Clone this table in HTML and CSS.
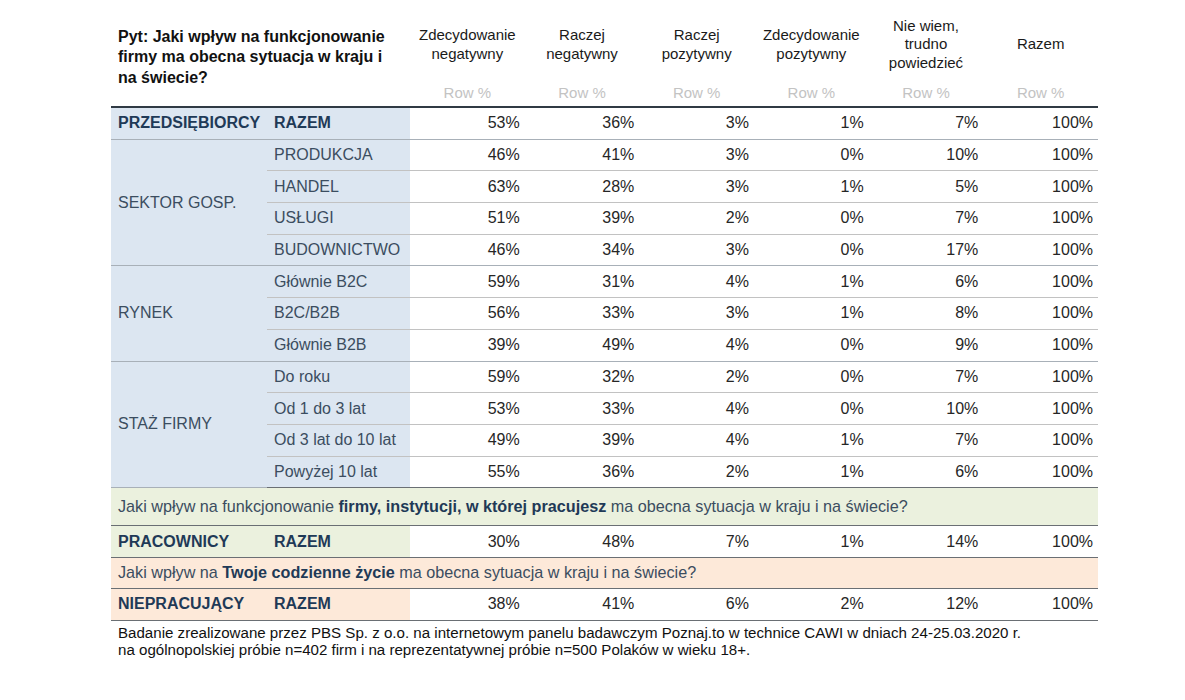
FILE: index.html
```html
<!DOCTYPE html>
<html lang="pl">
<head>
<meta charset="utf-8">
<title>Pyt: Jaki wpływ</title>
<link rel="stylesheet" href="styles.css">
</head>
<body>
<div class="page">
<table class="survey">
  <colgroup>
    <col class="c-group"><col class="c-sub">
    <col class="c-num"><col class="c-num"><col class="c-num"><col class="c-num"><col class="c-num"><col class="c-num">
  </colgroup>
  <thead>
    <tr class="h-labels">
      <th class="question" colspan="2" rowspan="2">Pyt: Jaki wpływ na funkcjonowanie<br>firmy ma obecna sytuacja w kraju i<br>na świecie?</th>
      <th>Zdecydowanie<br>negatywny</th>
      <th>Raczej<br>negatywny</th>
      <th>Raczej<br>pozytywny</th>
      <th>Zdecydowanie<br>pozytywny</th>
      <th>Nie wiem,<br>trudno<br>powiedzieć</th>
      <th>Razem</th>
    </tr>
    <tr class="h-unit">
      <th>Row %</th><th>Row %</th><th>Row %</th><th>Row %</th><th>Row %</th><th>Row %</th>
    </tr>
  </thead>
  <tbody>
    <tr class="group-end">
      <td class="lbl blue strong">PRZEDSIĘBIORCY</td><td class="lbl blue strong">RAZEM</td>
      <td>53%</td><td>36%</td><td>3%</td><td>1%</td><td>7%</td><td>100%</td>
    </tr>
    <tr>
      <td class="lbl blue grp" rowspan="4">SEKTOR GOSP.</td><td class="lbl blue">PRODUKCJA</td>
      <td>46%</td><td>41%</td><td>3%</td><td>0%</td><td>10%</td><td>100%</td>
    </tr>
    <tr>
      <td class="lbl blue">HANDEL</td>
      <td>63%</td><td>28%</td><td>3%</td><td>1%</td><td>5%</td><td>100%</td>
    </tr>
    <tr>
      <td class="lbl blue">USŁUGI</td>
      <td>51%</td><td>39%</td><td>2%</td><td>0%</td><td>7%</td><td>100%</td>
    </tr>
    <tr class="group-end">
      <td class="lbl blue">BUDOWNICTWO</td>
      <td>46%</td><td>34%</td><td>3%</td><td>0%</td><td>17%</td><td>100%</td>
    </tr>
    <tr>
      <td class="lbl blue grp" rowspan="3">RYNEK</td><td class="lbl blue">Głównie B2C</td>
      <td>59%</td><td>31%</td><td>4%</td><td>1%</td><td>6%</td><td>100%</td>
    </tr>
    <tr>
      <td class="lbl blue">B2C/B2B</td>
      <td>56%</td><td>33%</td><td>3%</td><td>1%</td><td>8%</td><td>100%</td>
    </tr>
    <tr class="group-end">
      <td class="lbl blue">Głównie B2B</td>
      <td>39%</td><td>49%</td><td>4%</td><td>0%</td><td>9%</td><td>100%</td>
    </tr>
    <tr>
      <td class="lbl blue grp" rowspan="4">STAŻ FIRMY</td><td class="lbl blue">Do roku</td>
      <td>59%</td><td>32%</td><td>2%</td><td>0%</td><td>7%</td><td>100%</td>
    </tr>
    <tr>
      <td class="lbl blue">Od 1 do 3 lat</td>
      <td>53%</td><td>33%</td><td>4%</td><td>0%</td><td>10%</td><td>100%</td>
    </tr>
    <tr>
      <td class="lbl blue">Od 3 lat do 10 lat</td>
      <td>49%</td><td>39%</td><td>4%</td><td>1%</td><td>7%</td><td>100%</td>
    </tr>
    <tr class="section-end">
      <td class="lbl blue">Powyżej 10 lat</td>
      <td>55%</td><td>36%</td><td>2%</td><td>1%</td><td>6%</td><td>100%</td>
    </tr>
    <tr class="q-row green">
      <td colspan="8" class="q-text">Jaki wpływ na funkcjonowanie <b>firmy, instytucji, w której pracujesz</b> ma obecna sytuacja w kraju i na świecie?</td>
    </tr>
    <tr class="section-end">
      <td class="lbl green-bg strong">PRACOWNICY</td><td class="lbl green-bg strong">RAZEM</td>
      <td>30%</td><td>48%</td><td>7%</td><td>1%</td><td>14%</td><td>100%</td>
    </tr>
    <tr class="q-row peach">
      <td colspan="8" class="q-text">Jaki wpływ na <b>Twoje codzienne życie</b> ma obecna sytuacja w kraju i na świecie?</td>
    </tr>
    <tr class="section-end">
      <td class="lbl peach-bg strong">NIEPRACUJĄCY</td><td class="lbl peach-bg strong">RAZEM</td>
      <td>38%</td><td>41%</td><td>6%</td><td>2%</td><td>12%</td><td>100%</td>
    </tr>
  </tbody>
</table>
<p class="note">Badanie zrealizowane przez PBS Sp. z o.o. na internetowym panelu badawczym Poznaj.to w technice CAWI w dniach 24-25.03.2020 r.<br>na ogólnopolskiej próbie n=402 firm i na reprezentatywnej próbie n=500 Polaków w wieku 18+.</p>
</div>
</body>
</html>
```

FILE: styles.css
```css
html, body {
  margin: 0;
  padding: 0;
  background: #ffffff;
}

.page {
  padding: 9px 0 0 111px;
  font-family: "Liberation Sans", Arial, sans-serif;
  color: #222222;
}

.survey {
  width: 987px;
  table-layout: fixed;
  border-collapse: collapse;
  font-size: 16px;
}

.c-group { width: 156px; }
.c-sub { width: 143px; }
.c-num { width: 114.66px; }

.survey th {
  font-weight: normal;
  font-size: 15px;
  line-height: 18.5px;
  text-align: center;
  vertical-align: middle;
  padding: 0;
  color: #1a1a1a;
}

.h-labels { height: 71px; }
.h-unit { height: 27px; }

.h-unit th {
  color: #c3c3c3;
  border-bottom: 2px solid #303a44;
}

.survey th.question {
  text-align: left;
  font-weight: bold;
  font-size: 16px;
  line-height: 20.5px;
  padding-left: 7px;
  color: #111111;
  border-bottom: 2px solid #303a44;
}

.survey td {
  height: 30.7px;
  padding: 0 5px 0 0;
  text-align: right;
  vertical-align: middle;
  color: #262626;
  border-bottom: 1px solid #c2c2c2;
  white-space: nowrap;
}

.survey td.lbl {
  text-align: left;
  padding: 0 0 0 7px;
  color: #3b4d60;
}

.survey td.strong {
  font-weight: bold;
  color: #1f3a57;
}

.blue { background: #dce6f1; }
.green-bg { background: #ebf1de; }
.peach-bg { background: #fde9d9; }

.survey tr.group-end td { border-bottom-color: #a8b0b8; }
.survey td.grp { border-bottom: 1px solid #a8b0b8; }

.survey tr.section-end td,
.survey tr.section-end td.grp { border-bottom: 1px solid #6a6f74; }

.survey tr:last-child td { border-bottom: 1px solid #6a6f74; }

.q-row td.q-text {
  text-align: left;
  font-size: 16.2px;
  padding: 0 0 0 7px;
  color: #3b4d60;
  border-bottom: 1px solid #6a6f74;
}

.q-row.green td.q-text { height: 37px; background: #ebf1de; }
.q-row.peach td.q-text { height: 30px; background: #fde9d9; }

.q-text b { color: #1f3a57; }

.note {
  margin: 3px 0 0 7px;
  font-size: 15.1px;
  line-height: 17px;
  color: #111111;
}
```
